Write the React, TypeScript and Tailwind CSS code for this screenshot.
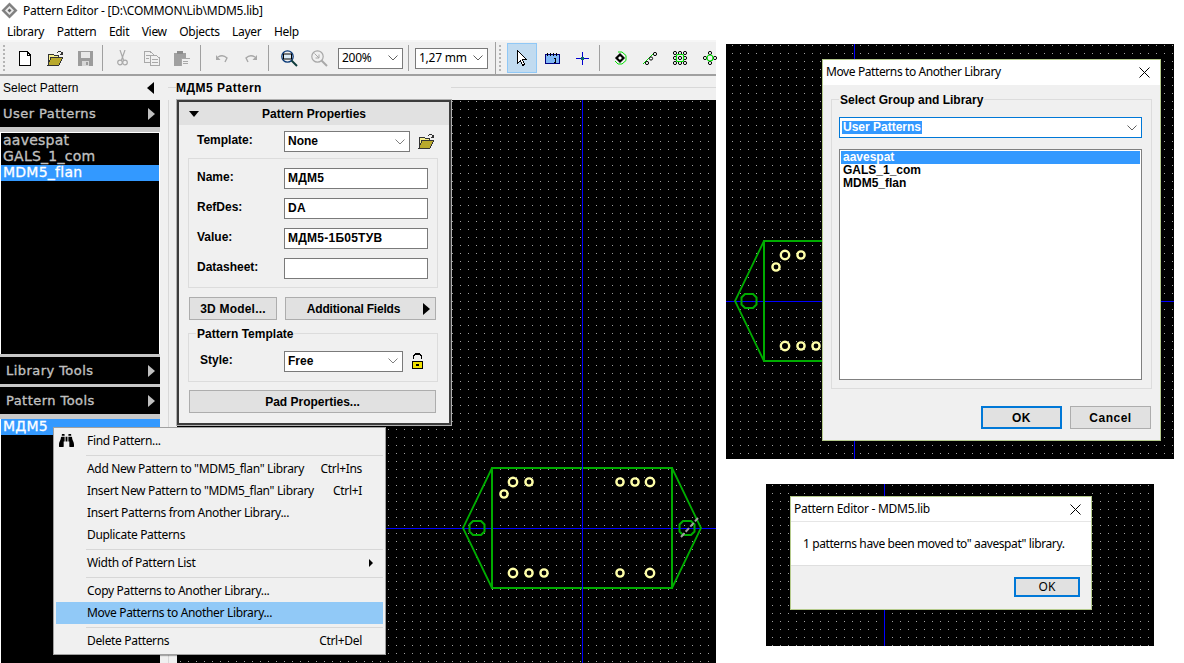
import { FaBinoculars } from 'react-icons/fa'

const menuBar = ['Library', 'Pattern', 'Edit', 'View', 'Objects', 'Layer', 'Help']

function Chevron({ className = 'text-[#606060]' }: { className?: string }) {
  return (
    <svg width="10" height="6" viewBox="0 0 10 6" className={className}>
      <path d="M0.5 0.5 L5 5 L9.5 0.5" fill="none" stroke="currentColor" strokeWidth="1" />
    </svg>
  )
}

function Tri({ dir, color }: { dir: 'l' | 'r' | 'd'; color: string }) {
  if (dir === 'l') return <div className="w-0 h-0" style={{ borderTop: '6px solid transparent', borderBottom: '6px solid transparent', borderRight: `7px solid ${color}` }} />
  if (dir === 'r') return <div className="w-0 h-0" style={{ borderTop: '6px solid transparent', borderBottom: '6px solid transparent', borderLeft: `7px solid ${color}` }} />
  return <div className="w-0 h-0" style={{ borderLeft: '5px solid transparent', borderRight: '5px solid transparent', borderTop: `6px solid ${color}` }} />
}

function AppLogo() {
  return (
    <svg width="17" height="17" viewBox="0 0 17 17">
      <path d="M8.500 0.500 L16.500 8.500 L8.500 16.500 L0.500 8.500 Z" fill="#808080" />
      <path d="M8.500 4 L13 8.500 L8.500 13 L4 8.500 Z" fill="#e8e8e8" />
      <path d="M8.500 6.500 L10.500 8.500 L8.500 10.500 L6.500 8.500 Z" fill="#6a6a6a" />
    </svg>
  )
}

function FolderIcon() {
  return (
    <svg width="17" height="15" viewBox="0 0 17 15" shapeRendering="crispEdges">
      <path d="M1 3 H6 L7 4 H11 V6 H5 L1 14 Z" fill="#f6ee8a" stroke="#333" strokeWidth="1" />
      <path d="M4 6 H16 L12 14 H1 Z" fill="#b9a92c" stroke="#333" strokeWidth="1" />
      <path d="M10 2 Q12 0 14 1 L15 3 M15 1 V3 H13" fill="none" stroke="#333" strokeWidth="1" />
    </svg>
  )
}

function ToolIcon({ name }: { name: string }) {
  const g = '#a8a8a8'
  switch (name) {
    case 'new':
      return (
        <svg width="12" height="15" viewBox="0 0 12 15" shapeRendering="crispEdges">
          <path d="M0.5 0.5 H8 L11.5 4 V14.5 H0.5 Z" fill="#fff" stroke="#000" />
          <path d="M8 0.5 V4 H11.5" fill="none" stroke="#000" />
        </svg>
      )
    case 'open':
      return <FolderIcon />
    case 'save':
      return (
        <svg width="15" height="15" viewBox="0 0 15 15" shapeRendering="crispEdges">
          <path d="M0 0 H15 V15 H0 Z" fill="#9c9c9c" />
          <rect x="3" y="1" width="9" height="6" fill="#e8e8e8" />
          <rect x="4" y="10" width="7" height="5" fill="#d8d8d8" />
          <rect x="8" y="11" width="2" height="3" fill="#9c9c9c" />
        </svg>
      )
    case 'cut':
      return (
        <svg width="11" height="16" viewBox="0 0 11 16" fill="none" stroke={g} strokeWidth="1.2">
          <path d="M3 0 L6.5 10 M8 0 L4.5 10" />
          <circle cx="3" cy="12.5" r="2.3" />
          <circle cx="8" cy="12.5" r="2.3" />
        </svg>
      )
    case 'copy':
      return (
        <svg width="16" height="15" viewBox="0 0 16 15" shapeRendering="crispEdges">
          <path d="M0.5 0.5 H6 L9 3 V11.5 H0.5 Z" fill="#f0f0f0" stroke={g} />
          <path d="M6.5 4.5 H12 L15.5 7 V14.5 H6.5 Z" fill="#f0f0f0" stroke={g} />
          <path d="M2 4.5 H6 M2 7.5 H5 M8 8.5 H14 M8 11.5 H14" stroke={g} />
        </svg>
      )
    case 'paste':
      return (
        <svg width="16" height="15" viewBox="0 0 16 15" shapeRendering="crispEdges">
          <rect x="0" y="2" width="12" height="13" rx="1" fill="#a0a0a0" />
          <rect x="3" y="0" width="6" height="3" fill="#8c8c8c" />
          <rect x="7" y="7" width="9" height="8" fill="#f0f0f0" stroke={g} />
          <path d="M9 10 H14 M9 12.5 H14" stroke={g} />
        </svg>
      )
    case 'undo':
      return (
        <svg width="13" height="9" viewBox="0 0 13 9" fill="none" stroke={g} strokeWidth="1.4">
          <path d="M3 3 Q8 0 12 4 L10 8" />
          <path d="M1 1 V6 H5.5 Z" fill={g} stroke="none" />
        </svg>
      )
    case 'redo':
      return (
        <svg width="13" height="9" viewBox="0 0 13 9" fill="none" stroke={g} strokeWidth="1.4">
          <path d="M10 3 Q5 0 1 4 L3 8" />
          <path d="M12 1 V6 H7.5 Z" fill={g} stroke="none" />
        </svg>
      )
    case 'zoom':
      return (
        <svg width="17" height="17" viewBox="0 0 17 17" fill="none">
          <circle cx="6.5" cy="6.5" r="5.7" stroke="#0a3a78" strokeWidth="1.3" />
          <rect x="2.5" y="4" width="8" height="5" fill="#dcecf8" stroke="#000" />
          <path d="M10.5 10.5 L16 16" stroke="#0d3b3b" strokeWidth="2" />
        </svg>
      )
    case 'zoomOff':
      return (
        <svg width="17" height="17" viewBox="0 0 17 17" fill="none" stroke={g}>
          <circle cx="6.5" cy="6.5" r="5.7" strokeWidth="1.2" />
          <path d="M10.5 10.5 L16 16" strokeWidth="2" />
          <path d="M3.5 3.5 L8 8 M8 4.5 V8 H4.5" />
        </svg>
      )
    case 'cursor':
      return (
        <svg width="10" height="16" viewBox="0 0 10 16" shapeRendering="crispEdges">
          <path d="M0.5 0.5 V13 L3.5 10.5 L5.5 15.5 L7.5 14.5 L5.5 9.5 H9.5 Z" fill="#fff" stroke="#000" />
        </svg>
      )
    case 'ruler':
      return (
        <svg width="15" height="11" viewBox="0 0 15 11" shapeRendering="crispEdges">
          <rect x="0.5" y="1.5" width="14" height="9" fill="#7fb7f5" stroke="#000080" />
          <path d="M2.5 0 V3 M5.5 0 V3 M8.5 0 V3 M11.5 0 V3" stroke="#000" />
          <path d="M8.5 5 H10 V9 H8.5 M10 5 V9" stroke="#000" fill="none" />
        </svg>
      )
    case 'cross':
      return (
        <svg width="13" height="13" viewBox="0 0 13 13" shapeRendering="crispEdges">
          <path d="M0 6.5 H13 M6.5 0 V13" stroke="#0000d0" />
          <rect x="5" y="5" width="3" height="3" fill="#0a6a6a" />
        </svg>
      )
    case 'pad1':
      return (
        <svg width="13" height="14" viewBox="0 0 13 14" fill="none">
          <path d="M4 1 H8 L12 4.500 V9.500 L8 13 H4 L1 10" stroke="#00e000" />
          <path d="M6 3.500 L9.500 7 L6 10.500 L2.500 7 Z" stroke="#000" strokeWidth="2.200" fill="#fff" />
        </svg>
      )
    case 'pad2':
      return (
        <svg width="14" height="14" viewBox="0 0 14 14" fill="none">
          <path d="M0 13 L12 1" stroke="#00d000" />
          <circle cx="4" cy="12" r="1.6" fill="#fff" stroke="#000" />
          <circle cx="8" cy="7.5" r="1.6" fill="#fff" stroke="#000" />
          <circle cx="12" cy="3" r="1.6" fill="#fff" stroke="#000" />
        </svg>
      )
    case 'pad3':
      return (
        <svg width="14" height="14" viewBox="0 0 14 14" fill="none" stroke="#000">
          {[2, 7, 12].flatMap(x => [2, 7, 12].map(y => <circle key={`${x}-${y}`} cx={x} cy={y} r="1.6" fill="#fff" />))}
          <rect x="3.5" y="3.5" width="7" height="7" rx="1" stroke="#00e000" strokeWidth="1.2" />
        </svg>
      )
    default:
      return (
        <svg width="14" height="14" viewBox="0 0 14 14" fill="none" stroke="#000">
          <circle cx="7" cy="2" r="1.6" fill="#fff" />
          <circle cx="7" cy="12" r="1.6" fill="#fff" />
          <circle cx="2" cy="7" r="1.6" fill="#fff" />
          <circle cx="12" cy="7" r="1.6" fill="#fff" />
          <circle cx="7" cy="7" r="3" stroke="#00e000" strokeWidth="1.2" />
        </svg>
      )
  }
}

function ToolBtn({ name }: { name: string }) {
  return (
    <div className="w-[30px] h-[30px] flex items-center justify-center shrink-0">
      <ToolIcon name={name} />
    </div>
  )
}

function Sep({ className }: { className: string }) {
  return <div className={`w-px h-[26px] bg-[#a0a0a0] shrink-0 ${className}`} />
}

function Grip({ className }: { className: string }) {
  return <div className={`w-[2px] h-[26px] shrink-0 bg-[repeating-linear-gradient(to_bottom,#b4b4b4_0,#b4b4b4_2px,transparent_2px,transparent_4px)] ${className}`} />
}

function Combo({ label, className }: { label: string; className: string }) {
  return (
    <div className={`h-[21px] bg-white border border-[#7a7a7a] flex items-center justify-between pl-[3px] pr-[4px] shrink-0 text-[12px] font-['Noto_Sans'] tracking-[-0.25px] ${className}`}>
      <span>{label}</span>
      <Chevron />
    </div>
  )
}

function Toolbar() {
  return (
    <div className="h-[36px] shrink-0 bg-[#f0f0f0] border-t-[2px] border-b-[2px] border-t-[#f6f6f6] border-b-[#a0a0a0] flex items-center">
      <Grip className="ml-[3px]" />
      <div className="ml-[5px] flex">
        <ToolBtn name="new" />
        <ToolBtn name="open" />
        <ToolBtn name="save" />
      </div>
      <Sep className="ml-[2px]" />
      <div className="ml-[4px] flex">
        <ToolBtn name="cut" />
        <ToolBtn name="copy" />
        <ToolBtn name="paste" />
      </div>
      <Sep className="ml-[3px]" />
      <div className="ml-[5px] flex">
        <ToolBtn name="undo" />
        <ToolBtn name="redo" />
      </div>
      <Sep className="ml-[2px]" />
      <div className="ml-[5px] flex">
        <ToolBtn name="zoom" />
        <ToolBtn name="zoomOff" />
      </div>
      <Combo label="200%" className="ml-[4px] w-[65px]" />
      <Sep className="ml-[5px]" />
      <Combo label="1,27 mm" className="ml-[6px] w-[73px]" />
      <div className="w-px h-[32px] bg-[#a0a0a0] shrink-0 ml-[7px]" />
      <Grip className="ml-[3px]" />
      <div className="ml-[6px] w-[30px] h-[30px] bg-[#c1dbf0] border border-[#90c8f6] flex items-center justify-center shrink-0">
        <ToolIcon name="cursor" />
      </div>
      <ToolBtn name="ruler" />
      <ToolBtn name="cross" />
      <Sep className="ml-[2px]" />
      <div className="ml-[5px] flex">
        <ToolBtn name="pad1" />
        <ToolBtn name="pad2" />
        <ToolBtn name="pad3" />
        <ToolBtn name="pad4" />
      </div>
    </div>
  )
}

function BlackBar({ label, className, inset }: { label: string; className: string; inset: string }) {
  return (
    <div className={`h-[27px] bg-black flex items-center justify-between pr-[5px] shrink-0 ${inset} ${className}`}>
      <span className="text-[#c0c0c0] font-['DejaVu_Sans'] text-[13px] tracking-[0.45px] pt-[1px] [-webkit-text-stroke:0.35px_#c0c0c0]">{label}</span>
      <Tri dir="r" color="#c0c0c0" />
    </div>
  )
}

function PatternPanel() {
  const rowText = "font-['DejaVu_Sans'] text-[14px] leading-[15px] h-[16px] pl-[2px] tracking-[0.25px] [-webkit-text-stroke:0.3px_currentColor]"
  return (
    <div className="w-[160px] shrink-0 flex flex-col bg-[#c8c8c8]">
      <div className="h-[24px] bg-[#f0f0f0] flex items-center justify-between pl-[3px] pr-[6px] text-[12px] shrink-0">
        <span>Select Pattern</span>
        <Tri dir="l" color="#000" />
      </div>
      <BlackBar label="User Patterns" className="mt-0" inset="pl-[3px]" />
      <div className="mt-[5px] h-[222px] bg-black border-x border-t border-white shrink-0 text-[#c0c0c0]">
        <div className={rowText}>aavespat</div>
        <div className={rowText}>GALS_1_com</div>
        <div className={`${rowText} bg-[#3399ff] text-white`}>MDM5_flan</div>
      </div>
      <BlackBar label="Library Tools" className="mt-[3px]" inset="pl-[6px]" />
      <BlackBar label="Pattern Tools" className="mt-[3px]" inset="pl-[6px]" />
      <div className="mt-[5px] flex-1 bg-black border-l border-white">
        <div className={`${rowText} bg-[#3399ff] text-white`}>МДМ5</div>
      </div>
    </div>
  )
}

// same board in all canvases, page coords of the main one
function Board() {
  const green = '#00ac00'
  const pads: [number, number, number][] = [
    [513, 482, 4.2], [529, 482, 3.6], [504, 494, 3.6],
    [620, 482, 3.6], [635, 482, 3.6], [650, 482, 4.2],
    [513, 573, 4.2], [529, 573, 3.6], [544, 573, 3.6],
    [620, 573, 3.6], [650, 573, 4.2],
  ]
  return (
    <g>
      <rect x="492" y="468" width="180" height="120" fill="none" stroke={green} strokeWidth="2" shapeRendering="crispEdges" />
      <path d="M492 468 L463 528 L492 588 M672 468 L701 528 L672 588" fill="none" stroke={green} strokeWidth="1.8" />
      <path d="M473 521 H481 L484.5 524.5 V531.5 L481 535 H473 L469.500 531.5 V524.5 Z" fill="none" stroke={green} strokeWidth="2" />
      <path d="M683 521 H691 L694.500 524.5 V531.5 L691 535 H683 L679.500 531.5 V524.5 Z" fill="none" stroke={green} strokeWidth="2" />
      {pads.map(([x, y, r]) => (
        <circle key={`${x}-${y}`} cx={x} cy={y} r={r} fill="#000" stroke="#ffffa8" strokeWidth="2.4" />
      ))}
    </g>
  )
}

function Canvas({ id, x, y, w, h, children }: { id: string; x: number; y: number; w: number; h: number; children?: React.ReactNode }) {
  return (
    <svg width={w} height={h} viewBox={`${x} ${y} ${w} ${h}`} className="block bg-black">
      <defs>
        <pattern id={id} x="4" y="5" width="8" height="8" patternUnits="userSpaceOnUse">
          <rect width="1" height="1" fill="#a0a0a0" />
        </pattern>
      </defs>
      <rect x={x} y={y} width={w} height={h} fill={`url(#${id})`} />
      {children}
    </svg>
  )
}

function GroupBox({ title, className, children }: { title?: string; className: string; children: React.ReactNode }) {
  return (
    <div className={`relative border border-[#dcdcdc] ${className}`}>
      {title && <span className="absolute left-[7px] -top-[7px] bg-[#f0f0f0] px-px leading-[14px]">{title}</span>}
      {children}
    </div>
  )
}

function FormRow({ label, value }: { label: string; value: string }) {
  return (
    <div className="h-[21px] flex items-center">
      <span className="w-[95px] pl-[8px] -mt-[4px]">{label}</span>
      <div className="w-[144px] h-[21px] bg-white border border-[#7a7a7a] pl-[3px] leading-[19px] tracking-[0.25px]">{value}</div>
    </div>
  )
}

function PropertiesPanel() {
  return (
    <div className="absolute left-[177px] top-[100px] w-[274px] h-[325px] bg-[#f0f0f0] border-[2px] border-[#3c3c3c] outline outline-[1px] outline-[#b0b0b0] font-bold text-[12px] flex flex-col p-0">
      <div className="h-[23px] bg-[#e1e1e1] flex items-center relative shrink-0">
        <div className="ml-[10px]"><Tri dir="d" color="#000" /></div>
        <span className="absolute left-[83px] top-[3px]">Pattern Properties</span>
      </div>
      <div className="flex items-center h-[21px] mt-[6px] pl-[18px]">
        <span className="w-[87px] -mt-[4px]">Template:</span>
        <div className="w-[126px] h-[21px] bg-white border border-[#7a7a7a] pl-[3px] flex items-center justify-between pr-[4px]">
          <span className="-mt-px">None</span>
          <Chevron className="text-[#808080]" />
        </div>
        <div className="ml-[8px]"><FolderIcon /></div>
      </div>
      <GroupBox className="mt-[6px] ml-[9px] w-[250px] h-[130px] pt-[9px] flex flex-col gap-[9px]">
        <FormRow label="Name:" value="МДМ5" />
        <FormRow label="RefDes:" value="DA" />
        <FormRow label="Value:" value="МДМ5-1Б05ТУВ" />
        <FormRow label="Datasheet:" value="" />
      </GroupBox>
      <div className="flex mt-[9px] ml-[10px] gap-[8px]">
        <div className="w-[88px] h-[23px] bg-[#e1e1e1] border border-[#adadad] flex items-center justify-center tracking-[0.2px]">3D Model...</div>
        <div className="w-[151px] h-[23px] bg-[#e1e1e1] border border-[#adadad] flex items-center justify-center relative pr-[14px] tracking-[-0.2px]">
          Additional Fields
          <div className="absolute right-[5px] top-[5px]"><Tri dir="r" color="#000" /></div>
        </div>
      </div>
      <GroupBox title="Pattern Template" className="mt-[13px] ml-[9px] w-[250px] h-[49px] flex items-center pt-[7px] pl-[11px]">
        <span className="w-[84px] -mt-[3px]">Style:</span>
        <div className="w-[119px] h-[21px] bg-white border border-[#7a7a7a] pl-[3px] flex items-center justify-between pr-[4px]">
          <span>Free</span>
          <Chevron className="text-[#808080]" />
        </div>
        <svg width="13" height="17" viewBox="0 0 13 17" className="ml-[8px]" shapeRendering="crispEdges">
          <path d="M2.500 6 V4 Q2.500 0.8 6.500 0.8 Q10.500 0.800 10.500 4 V5.500" fill="none" stroke="#000" strokeWidth="1.4" />
          <rect x="1.500" y="8.500" width="10" height="7" fill="#f0e000" stroke="#000" />
          <rect x="5" y="11" width="3" height="2" fill="#000" />
        </svg>
      </GroupBox>
      <div className="mt-[8px] ml-[10px] w-[247px] h-[23px] bg-[#e1e1e1] border border-[#adadad] flex items-center justify-center">Pad Properties...</div>
    </div>
  )
}

function MenuItem({ label, shortcut, active, arrow, icon }: { label: string; shortcut?: string; active?: boolean; arrow?: boolean; icon?: boolean }) {
  return (
    <div className={`h-[22px] mx-[2px] pl-[31px] pr-[21px] flex items-center justify-between relative ${active ? 'bg-[#91c9f7]' : ''}`}>
      {icon && <FaBinoculars className="absolute left-[3px] top-[3px]" size={15} />}
      <span>{label}</span>
      {shortcut && <span>{shortcut}</span>}
      {arrow && <div className="absolute right-[10px] top-[7px] w-0 h-0 border-y-[4px] border-y-transparent border-l-[4px] border-l-black" />}
    </div>
  )
}

function MenuSep() {
  return <div className="h-px bg-[#d7d7d7] ml-[32px] mr-[2px] my-[2.500px]" />
}

function ContextMenu() {
  return (
    <div className="absolute left-[53px] top-[427px] w-[333px] h-[228px] bg-[#f0f0f0] border border-[#a0a0a0] shadow-[1px_1px_1px_rgba(0,0,0,0.3)] py-[2px] text-[12px] font-['Noto_Sans'] tracking-[-0.33px] leading-none text-[#000]">
      <MenuItem label="Find Pattern..." icon />
      <MenuSep />
      <MenuItem label={'Add New Pattern to "MDM5_flan" Library'} shortcut="Ctrl+Ins" />
      <MenuItem label={'Insert New Pattern to "MDM5_flan" Library'} shortcut="Ctrl+I" />
      <MenuItem label="Insert Patterns from Another Library..." />
      <MenuItem label="Duplicate Patterns" />
      <MenuSep />
      <MenuItem label="Width of Pattern List" arrow />
      <MenuSep />
      <MenuItem label="Copy Patterns to Another Library..." />
      <MenuItem label="Move Patterns to Another Library..." active />
      <MenuSep />
      <MenuItem label="Delete Patterns" shortcut="Ctrl+Del" />
    </div>
  )
}

function CloseX() {
  return (
    <svg width="11" height="11" viewBox="0 0 11 11" className="text-black">
      <path d="M0.5 0.5 L10.500 10.500 M10.500 0.500 L0.500 10.500" stroke="currentColor" strokeWidth="1" />
    </svg>
  )
}

function MoveDialog() {
  return (
    <div className="absolute left-[822px] top-[59px] w-[339px] h-[382px] border border-[#b5ca8c] bg-[#f0f0f0] flex flex-col">
      <div className="h-[25px] bg-white flex items-center justify-between pl-[3px] pr-[10px] text-[12px] font-['Noto_Sans'] tracking-[-0.4px] shrink-0">
        <span className="-mt-[2px]">Move Patterns to Another Library</span>
        <CloseX />
      </div>
      <GroupBox title="Select Group and Library" className="mt-[14px] ml-[8px] w-[321px] h-[290px] font-bold text-[12px]">
        <div className="mt-[17px] ml-[7px] w-[303px] h-[21px] bg-white border border-[#0078d7] flex items-center justify-between pl-[2px] pr-[4px]">
          <span className="bg-[#3399ff] text-white h-[13px] leading-[13px] pl-[1px] pr-[1px]">User Patterns</span>
          <Chevron />
        </div>
        <div className="mt-[11px] ml-[7px] w-[303px] h-[231px] bg-white border border-[#808080] p-px leading-[13px]">
          <div className="bg-[#3399ff] text-white h-[13px] pl-[2px]">aavespat</div>
          <div className="pl-[2px] h-[13px]">GALS_1_com</div>
          <div className="pl-[2px] h-[13px]">MDM5_flan</div>
        </div>
      </GroupBox>
      <div className="mt-[17px] ml-[158px] flex gap-[8px] font-bold text-[12px] tracking-[0.5px]">
        <div className="w-[81px] h-[23px] bg-[#e1e1e1] border-[2px] border-[#0078d7] flex items-center justify-center pt-[1px]">OK</div>
        <div className="w-[81px] h-[23px] bg-[#e1e1e1] border border-[#adadad] flex items-center justify-center pt-[1px]">Cancel</div>
      </div>
    </div>
  )
}

function DoneDialog() {
  return (
    <div className="absolute left-[790px] top-[496px] w-[302px] h-[114px] border border-[#b5ca8c] bg-white flex flex-col text-[12px] font-['Noto_Sans']">
      <div className="h-[25px] flex items-center justify-between pl-[3px] pr-[10px] border-b border-[#e6e6e6] tracking-[-0.28px] shrink-0">
        <span>Pattern Editor - MDM5.lib</span>
        <CloseX />
      </div>
      <div className="h-[44px] pl-[12px] flex items-center border-b border-[#dfdfdf] tracking-[-0.4px] shrink-0">
        1 patterns have been moved to" aavespat" library.
      </div>
      <div className="flex-1 bg-[#f0f0f0] flex justify-end pt-[11px] pr-[11px]">
        <div className="w-[66px] h-[20px] bg-[#e1e1e1] border-[2px] border-[#0078d7] flex items-center justify-center">OK</div>
      </div>
    </div>
  )
}

function MainWindow() {
  return (
    <div className="absolute left-0 top-0 w-[716px] h-[663px] flex flex-col bg-white">
      <div className="h-[20px] flex items-center pl-[1px] pt-[1px] gap-[5px] text-[12px] font-['Noto_Sans'] tracking-[-0.25px] shrink-0">
        <AppLogo />
        <span>Pattern Editor - [D:\COMMON\Lib\MDM5.lib]</span>
      </div>
      <div className="h-[20px] flex items-center pl-[7px] pt-[4px] gap-[12.500px] text-[12px] font-['Noto_Sans'] tracking-[-0.3px] shrink-0">
        {menuBar.map(m => <span key={m}>{m}</span>)}
      </div>
      <Toolbar />
      <div className="flex-1 flex min-h-0">
        <PatternPanel />
        <div className="flex-1 flex flex-col min-w-0">
          <div className="h-[24px] shrink-0 bg-[#f0f0f0] relative flex items-center">
            <span className="absolute left-[16px] top-[3px] font-bold text-[12px] tracking-[0.5px]">МДМ5 Pattern</span>
            <div className="absolute left-[291px] right-0 top-[11px] h-px bg-[#d8d8d8]" />
            <div className="absolute left-[8px] w-[8px] top-[11px] h-px bg-[#d8d8d8]" />
          </div>
          <div className="flex-1 flex min-h-0">
            <div className="w-[17px] shrink-0 bg-[#f0f0f0] pl-[8px]">
              <div className="w-px h-full bg-[#d8d8d8]" />
            </div>
            <Canvas id="dotsMain" x={177} y={100} w={539} h={563}>
              <path d="M177 528.500 H716" stroke="#0000ff" shapeRendering="crispEdges" />
              <Board />
              <path d="M582.500 100 V663" stroke="#0000ff" shapeRendering="crispEdges" />
              <path d="M681 537 L698 518" stroke="#a0a0a0" strokeWidth="2" strokeDasharray="5 2" />
            </Canvas>
          </div>
        </div>
      </div>
      <PropertiesPanel />
      <ContextMenu />
    </div>
  )
}

export default function App() {
  return (
    <div className="relative w-[1184px] h-[663px] bg-white overflow-hidden font-['Liberation_Sans',sans-serif] text-black">
      <MainWindow />
      <div className="absolute left-[726px] top-[44px]">
        <Canvas id="dotsMove" x={726} y={44} w={448} h={415}>
          <path d="M726 301.500 H1174" stroke="#0000ff" shapeRendering="crispEdges" />
          <path d="M854.500 44 V459" stroke="#0000ff" shapeRendering="crispEdges" />
          <g transform="translate(272 -227)"><Board /></g>
        </Canvas>
      </div>
      <MoveDialog />
      <div className="absolute left-[766px] top-[484px]">
        <Canvas id="dotsDone" x={766} y={484} w={388} h={162}>
          <path d="M884.500 484 V646" stroke="#0000ff" shapeRendering="crispEdges" />
        </Canvas>
      </div>
      <DoneDialog />
    </div>
  )
}
